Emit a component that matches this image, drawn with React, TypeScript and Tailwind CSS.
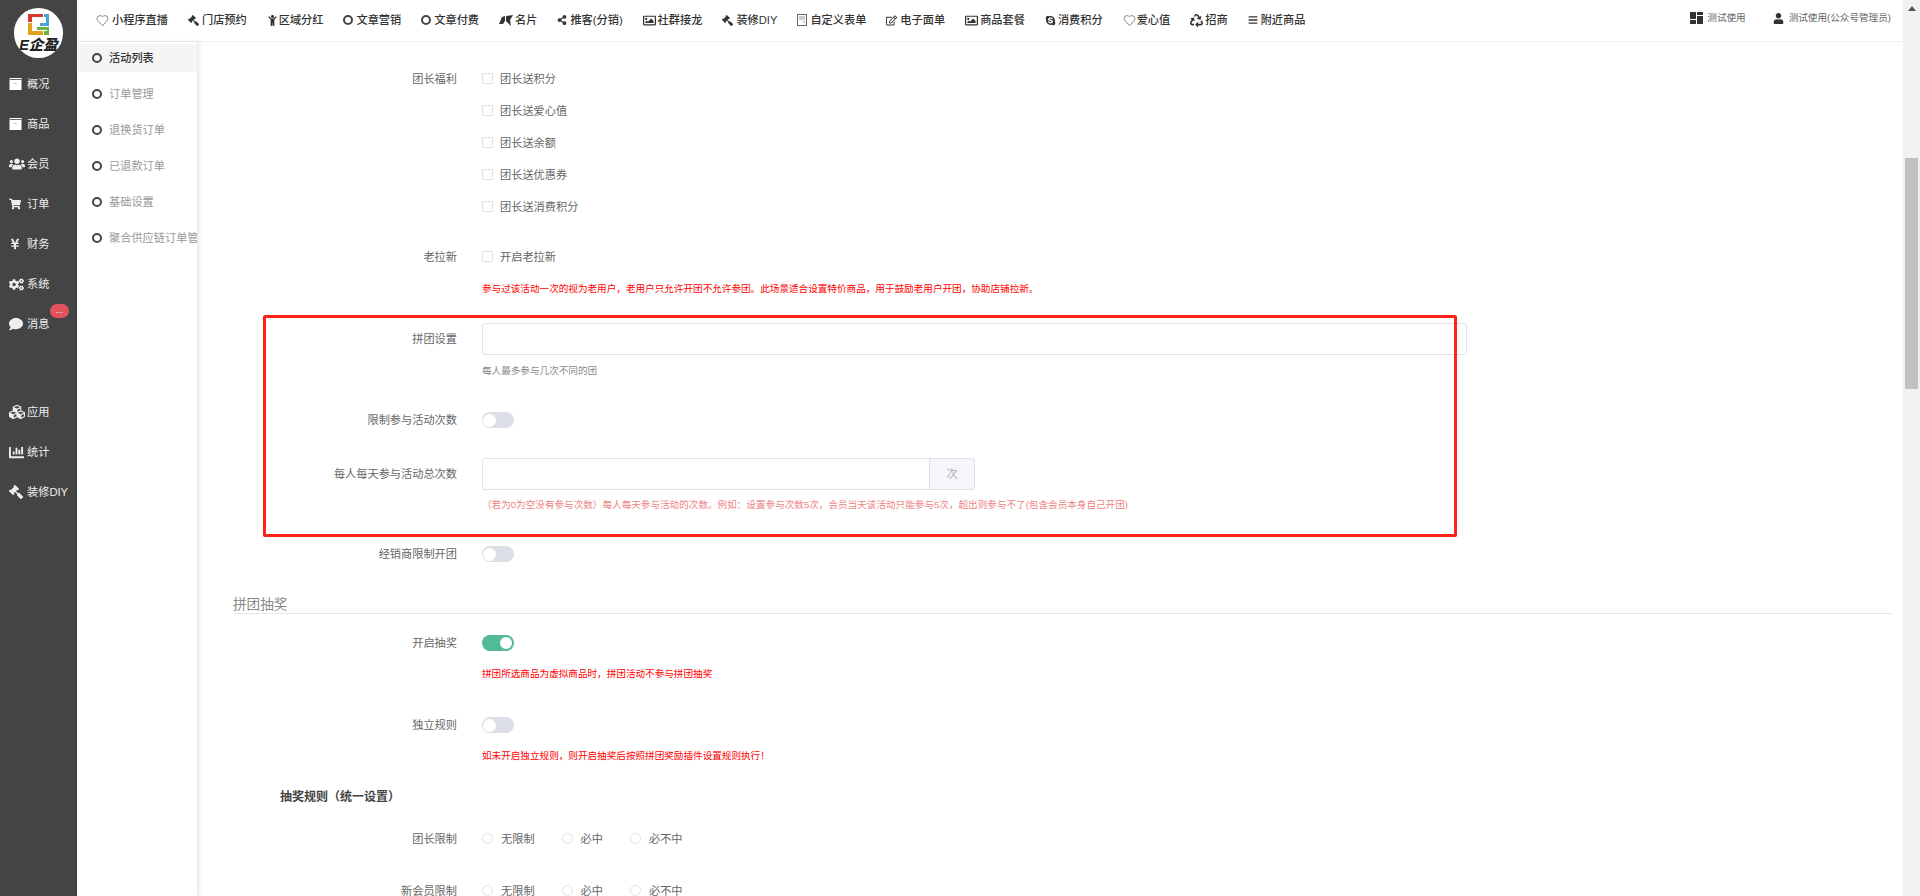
import type { ReactNode } from "react";
import {
  FaChartBar,
  FaChild,
  FaCogs,
  FaComment,
  FaCubes,
  FaGavel,
  FaRecycle,
  FaRegEdit,
  FaRegImage,
  FaShareAlt,
  FaShoppingCart,
  FaSkype,
  FaUser,
  FaUsers,
  FaYenSign,
  FaBars,
} from "react-icons/fa";
import { LuHeart } from "react-icons/lu";

const Ring = () => (
  <span className="block w-[10px] h-[10px] shrink-0 rounded-full border-2 border-[#444]" />
);

const Gavel = ({ size }: { size: number }) => <FaGavel size={size} className="-scale-x-100" />;

const Heart = () => <LuHeart size={13} strokeWidth={1.3} className="text-[#555]" />;

const BoxIcon = () => (
  <svg width="13" height="12" viewBox="0 0 13 12" className="shrink-0">
    <rect x="0.5" y="0" width="12" height="12" fill="#fff" />
    <rect x="0.5" y="1" width="12" height="1" fill="#666" />
    <rect x="5" y="5" width="3" height="1" fill="#bbb" />
  </svg>
);

const CardIcon = () => (
  <svg width="14" height="11" viewBox="0 0 14 11" className="shrink-0" fill="#333">
    <path d="M0 9 L3 2 L6 1 L6 6 L4 9 Z M7 1 L14 0 L11 5 L12 11 L9 8 L7 6 Z" />
  </svg>
);

const FormIcon = () => (
  <svg width="10" height="12" viewBox="0 0 10 12" className="shrink-0" fill="none">
    <rect x="0.5" y="0.5" width="9" height="11" stroke="#666" />
    <path d="M2 3h6M2 5h6M6 8h2" stroke="#999" />
  </svg>
);

const LayoutIcon = () => (
  <svg width="13" height="12" viewBox="0 0 13 12" className="shrink-0" fill="#333">
    <rect x="0" y="0" width="6" height="7" />
    <rect x="7" y="0" width="6" height="3" />
    <rect x="0" y="8" width="6" height="4" />
    <rect x="7" y="4" width="6" height="8" />
  </svg>
);

const topNav: { icon: ReactNode; label: string; w: string }[] = [
  { icon: <Heart />, label: "小程序直播", w: "w-4" },
  { icon: <Gavel size={11} />, label: "门店预约", w: "w-[14px]" },
  { icon: <FaChild size={11} />, label: "区域分红", w: "w-3" },
  { icon: <Ring />, label: "文章营销", w: "w-[13px]" },
  { icon: <Ring />, label: "文章付费", w: "w-[13px]" },
  { icon: <CardIcon />, label: "名片", w: "w-4" },
  { icon: <FaShareAlt size={10} />, label: "推客(分销)", w: "w-[13px]" },
  { icon: <FaRegImage size={13} />, label: "社群接龙", w: "w-[15px]" },
  { icon: <Gavel size={11} />, label: "装修DIY", w: "w-[14px]" },
  { icon: <FormIcon />, label: "自定义表单", w: "w-[13px]" },
  { icon: <FaRegEdit size={11} />, label: "电子面单", w: "w-[14px]" },
  { icon: <FaRegImage size={13} />, label: "商品套餐", w: "w-[15px]" },
  { icon: <FaSkype size={11} />, label: "消费积分", w: "w-[13px]" },
  { icon: <Heart />, label: "爱心值", w: "w-[14px]" },
  { icon: <FaRecycle size={13} />, label: "招商", w: "w-[15px]" },
  { icon: <FaBars size={10} />, label: "附近商品", w: "w-[13px]" },
];

const sideTop: { icon: ReactNode; label: string }[] = [
  { icon: <BoxIcon />, label: "概况" },
  { icon: <BoxIcon />, label: "商品" },
  { icon: <FaUsers size={16} />, label: "会员" },
  { icon: <FaShoppingCart size={12} />, label: "订单" },
  { icon: <FaYenSign size={12} />, label: "财务" },
  { icon: <FaCogs size={15} />, label: "系统" },
  { icon: <FaComment size={14} />, label: "消息" },
];

const sideBottom: { icon: ReactNode; label: string }[] = [
  { icon: <FaCubes size={16} />, label: "应用" },
  { icon: <FaChartBar size={15} />, label: "统计" },
  { icon: <Gavel size={14} />, label: "装修DIY" },
];

const subNav = ["订单管理", "退换货订单", "已退款订单", "基础设置", "聚合供应链订单管理"];

const leaderPerks = ["团长送积分", "团长送爱心值", "团长送余额", "团长送优惠券", "团长送消费积分"];

function SideItem({ icon, label }: { icon: ReactNode; label: string }) {
  return (
    <div className="relative h-10 flex items-center pl-[9px] text-[11.2px] text-[#eee]">
      <span className="w-[18px] flex justify-start">{icon}</span>
      <span className="whitespace-nowrap">{label}</span>
      {label === "消息" && (
        <span className="absolute left-[50px] top-0 w-[19px] h-[14px] rounded-full bg-[#e2525c] text-white text-[9px] leading-[13px] text-center">
          ...
        </span>
      )}
    </div>
  );
}

function Row({
  label,
  className = "",
  children,
}: {
  label?: string;
  className?: string;
  children?: ReactNode;
}) {
  return (
    <div className={`flex items-center pl-[37px] ${className}`}>
      <div className="w-[223px] shrink-0 text-right text-[11.2px] text-[#666] whitespace-nowrap">{label}</div>
      <div className="ml-[25px] flex-1 flex items-center min-w-0">{children}</div>
    </div>
  );
}

function Toggle({ on = false }: { on?: boolean }) {
  return on ? (
    <span className="flex justify-end items-center w-8 h-4 rounded-full bg-[#52ba97] pr-[2px]">
      <span className="block w-3 h-3 rounded-full bg-white" />
    </span>
  ) : (
    <span className="flex items-center w-8 h-4 rounded-full bg-[#dcdfe6] pl-[1px]">
      <span className="block w-[13px] h-[13px] rounded-full bg-white" />
    </span>
  );
}

function Check({ label }: { label: string }) {
  return (
    <span className="flex items-center text-[11.2px] text-[#666]">
      <span className="block w-[11px] h-[11px] rounded-[1px] border border-[#dfe1e6] bg-white mr-[7px]" />
      {label}
    </span>
  );
}

function RadioGroup() {
  return (
    <div className="flex items-center text-[11.2px] text-[#666]">
      <span className="w-[11px] h-[11px] rounded-full border border-[#dfe1e6] mr-[8px]" />
      无限制
      <span className="w-[11px] h-[11px] rounded-full border border-[#dfe1e6] ml-[27px] mr-[8px]" />
      必中
      <span className="w-[11px] h-[11px] rounded-full border border-[#dfe1e6] ml-[27px] mr-[8px]" />
      必不中
    </div>
  );
}

export default function App() {
  return (
    <div className="flex h-screen overflow-hidden bg-white font-['Liberation_Sans','Noto_Sans_CJK_SC',sans-serif]">
      <aside className="w-[77px] shrink-0 bg-[#444444] pt-2">
        <div className="ml-[14px] w-[49px] h-[50px] rounded-full bg-white overflow-hidden flex flex-col items-center">
          <svg width="21" height="21" viewBox="0 0 21 21" className="mt-[6px] shrink-0">
            <path d="M0 0h15v3H4v5H0z" fill="#d8382f" />
            <path d="M16 0h5v12h-9V9h6V3h-2z" fill="#4aa0d8" />
            <path d="M0 9h4v8h11v4H0z" fill="#e3a21a" />
            <path d="M9 13h12v8h-5v-4h3v-1H9z" fill="#6cb33f" />
          </svg>
          <span className="mt-[3px] text-[14.5px] leading-[15px] font-black italic text-[#222] whitespace-nowrap">E企盈</span>
        </div>
        <nav className="mt-[6px]">
          {sideTop.map((item) => (
            <SideItem key={item.label} icon={item.icon} label={item.label} />
          ))}
        </nav>
        <nav className="mt-[48px]">
          {sideBottom.map((item) => (
            <SideItem key={item.label} icon={item.icon} label={item.label} />
          ))}
        </nav>
      </aside>

      <div className="flex-1 min-w-0 flex flex-col">
        <header className="h-[42px] shrink-0 flex items-center border-b border-[#f0f0f0] pl-[19px] pr-[12px]">
          <nav className="flex items-center gap-5 text-[11.2px] font-medium text-[#333]">
            {topNav.map((item) => (
              <span key={item.label} className="flex items-center whitespace-nowrap">
                <span className={`${item.w} flex items-center shrink-0`}>{item.icon}</span>
                {item.label}
              </span>
            ))}
          </nav>
          <div className="ml-auto flex items-center text-[9.6px] text-[#666]">
            <span className="flex items-center gap-[4px] mb-[4px]">
              <LayoutIcon />
              测试使用
            </span>
            <span className="flex items-center gap-[5px] ml-[27px] mb-[4px]">
              <FaUser size={11} className="text-[#333]" />
              测试使用(公众号管理员)
            </span>
          </div>
        </header>

        <div className="flex-1 min-h-0 flex">
          <div className="w-[120px] shrink-0 pt-[2px] shadow-[2px_0_4px_rgba(0,0,0,0.1)] overflow-hidden text-[11.2px] text-[#999]">
            <div className="h-7 mb-1 flex items-center pl-[15px] gap-[7px] bg-[#f5f5f5] font-medium text-[#333]">
              <Ring />
              活动列表
            </div>
            {subNav.map((name) => (
              <div key={name} className="h-9 flex items-center pl-[15px] gap-[7px] whitespace-nowrap">
                <Ring />
                {name}
              </div>
            ))}
          </div>

          <main className="relative flex-1 min-w-0 overflow-hidden pt-[21px]">
            <div className="absolute left-[66px] top-[273px] w-[1194px] h-[222px] rounded-[2px] border-[3px] border-[#ff2016] pointer-events-none" />

            <Row label="团长福利" className="h-8">
              <Check label={leaderPerks[0]} />
            </Row>
            {leaderPerks.slice(1).map((perk) => (
              <Row key={perk} className="h-8">
                <Check label={perk} />
              </Row>
            ))}

            <Row label="老拉新" className="h-8 mt-[18px]">
              <Check label="开启老拉新" />
            </Row>
            <Row className="h-5 mt-[6px]">
              <span className="text-[9.6px] text-[#ff0000] whitespace-nowrap">
                参与过该活动一次的视为老用户，老用户只允许开团不允许参团。此场景适合设置特价商品，用于鼓励老用户开团，协助店铺拉新。
              </span>
            </Row>

            <Row label="拼团设置" className="h-8 mt-[24px]">
              <input className="w-[985px] h-8 rounded-[3px] border border-[#dfe1e6] bg-white outline-none" />
            </Row>
            <Row className="h-4 mt-[8px]">
              <span className="text-[9.6px] text-[#8a8a8a]">每人最多参与几次不同的团</span>
            </Row>

            <Row label="限制参与活动次数" className="h-8 mt-[25px]">
              <Toggle />
            </Row>

            <Row label="每人每天参与活动总次数" className="h-8 mt-[22px]">
              <div className="flex w-[493px] h-8">
                <input className="flex-1 min-w-0 rounded-l-[3px] border border-[#dfe1e6] bg-white outline-none" />
                <span className="w-[45px] flex items-center justify-center rounded-r-[3px] border border-l-0 border-[#dfe1e6] bg-[#f5f6fa] text-[11.2px] text-[#aaa]">
                  次
                </span>
              </div>
            </Row>
            <Row className="h-4 mt-[7px]">
              <span className="text-[9.6px] text-[#ee8585] whitespace-nowrap">
                （若为0为空没有参与次数）每人每天参与活动的次数。例如：设置参与次数5次，会员当天该活动只能参与5次，超出则参与不了(包含会员本身自己开团)
              </span>
            </Row>

            <Row label="经销商限制开团" className="h-8 mt-[25px]">
              <Toggle />
            </Row>

            <div className="ml-[36px] mr-[11px] mt-[23px] h-[21px] border-b border-[#e8e8e8] text-[13.6px] leading-[23px] text-[#888]">
              拼团抽奖
            </div>

            <Row label="开启抽奖" className="h-8 mt-[13px]">
              <Toggle on />
            </Row>
            <Row className="h-5 mt-[5px]">
              <span className="text-[9.6px] text-[#ff0000]">拼团所选商品为虚拟商品时，拼团活动不参与拼团抽奖</span>
            </Row>

            <Row label="独立规则" className="h-8 mt-[25px]">
              <Toggle />
            </Row>
            <Row className="h-5 mt-[5px]">
              <span className="text-[9.6px] text-[#ff0000]">如未开启独立规则，则开启抽奖后按照拼团奖励插件设置规则执行！</span>
            </Row>

            <div className="ml-[83px] mt-[21px] h-5 flex items-center text-[12px] font-bold text-[#444]">
              抽奖规则（统一设置）
            </div>

            <Row label="团长限制" className="h-8 mt-[16px]">
              <RadioGroup />
            </Row>
            <Row label="新会员限制" className="h-8 mt-[20px]">
              <RadioGroup />
            </Row>
          </main>
        </div>
      </div>

      <div className="relative w-[17px] shrink-0 bg-[#f1f1f1]">
        <span className="absolute left-[5px] top-[6px] border-x-[4px] border-x-transparent border-b-[5px] border-b-[#505050]" />
        <span className="absolute left-[2px] top-[158px] w-[13px] h-[231px] bg-[#c1c1c1]" />
      </div>
    </div>
  );
}
